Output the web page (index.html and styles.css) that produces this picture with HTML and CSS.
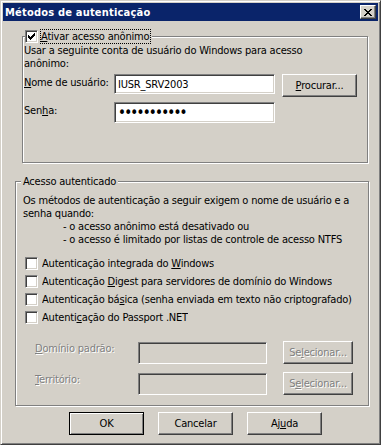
FILE: index.html
```html
<!DOCTYPE html>
<html lang="pt-BR">

<head>
    <meta charset="UTF-8">
    <meta name="viewport" content="width=device-width, initial-scale=1.0">
    <title>Métodos de autenticação</title>
    <link rel="stylesheet" href="styles.css">
</head>

<body>
    <div class="window">
        <div class="titlebar">
            <span class="title">Métodos de autenticação</span>
            <span class="close">
                <svg viewBox="0 0 8 7" width="8" height="7" shape-rendering="crispEdges">
                    <path d="M0 0h2v1h-2z M6 0h2v1h-2z M1 1h2v1h-2z M5 1h2v1h-2z M2 2h4v1h-4z M3 3h2v1h-2z M2 4h4v1h-4z M1 5h2v1h-2z M5 5h2v1h-2z M0 6h2v1h-2z M6 6h2v1h-2z" fill="#000" />
                </svg>
            </span>
        </div>

        <fieldset class="group anon">
            <legend>
                <span class="cb checked">
                    <svg viewBox="0 0 7 7" width="7" height="7" shape-rendering="crispEdges">
                        <path d="M0 2h1v3h-1z M1 3h1v3h-1z M2 4h1v3h-1z M3 3h1v3h-1z M4 2h1v3h-1z M5 1h1v3h-1z M6 0h1v3h-1z" fill="#000" />
                    </svg>
                </span>
                <span class="focus"><u>A</u>tivar acesso anônimo</span>
            </legend>
            <div class="inner">
                <p>Usar a seguinte conta de usuário do Windows para acesso<br>anônimo:</p>
                <div class="field user">
                    <label><u>N</u>ome de usuário:</label>
                    <input type="text" value="IUSR_SRV2003">
                    <button class="btn"><u>P</u>rocurar...</button>
                </div>
                <div class="field pass">
                    <label>Sen<u>h</u>a:</label>
                    <input type="password" value="xxxxxxxxxxx">
                </div>
            </div>
        </fieldset>

        <fieldset class="group auth">
            <legend>Acesso autenticado</legend>
            <div class="inner">
                <p>Os métodos de autenticação a seguir exigem o nome de usuário e a<br>senha quando:</p>
                <p class="cases">- o acesso anônimo está desativado ou<br>- o acesso é limitado por listas de controle de acesso NTFS</p>
                <div class="checks">
                    <div class="check"><span class="cb"></span><span class="text">Autenticação integrada do <u>W</u>indows</span></div>
                    <div class="check"><span class="cb"></span><span class="text">Autenticação <u>D</u>igest para servidores de domínio do Windows</span></div>
                    <div class="check"><span class="cb"></span><span class="text">Autenticação bá<u>s</u>ica (senha enviada em texto não criptografado)</span></div>
                    <div class="check"><span class="cb"></span><span class="text">Autenti<u>c</u>ação do Passport .NET</span></div>
                </div>
                <div class="field off">
                    <label><u>D</u>omínio padrão:</label>
                    <input type="text" disabled>
                    <button class="btn" disabled>Se<u>l</u>ecionar...</button>
                </div>
                <div class="field off">
                    <label><u>T</u>erritório:</label>
                    <input type="text" disabled>
                    <button class="btn" disabled>S<u>e</u>lecionar...</button>
                </div>
            </div>
        </fieldset>

        <div class="actions">
            <button class="btn default">OK</button>
            <button class="btn">Cancelar</button>
            <button class="btn">Aj<u>u</u>da</button>
        </div>
    </div>
</body>

</html>
```

FILE: styles.css
```css
html,
body {
    margin: 0;
    background-color: #d4d0c8;
}

.window {
    width: 381px;
    height: 445px;
    box-sizing: border-box;
    background-color: #d4d0c8;
    border: 1px solid;
    border-color: #d4d0c8 #404040 #404040 #d4d0c8;
    box-shadow: inset 1px 1px #fff, inset -1px -1px #808080;
    padding: 2px;
    font-family: "DejaVu Sans Condensed", "Liberation Sans", sans-serif;
    font-size: 11px;
    line-height: 13px;
    letter-spacing: -0.2px;
    color: #000;
}

.titlebar {
    height: 18px;
    display: flex;
    align-items: center;
    background-color: #0a246a;
    color: #fff;
    padding: 0 2px;
    margin-bottom: 1px;
}

.title {
    font-weight: bold;
    letter-spacing: 0.2px;
}

.close {
    width: 16px;
    height: 14px;
    box-sizing: border-box;
    margin-left: auto;
    display: flex;
    align-items: center;
    justify-content: center;
    background-color: #d4d0c8;
    border: 1px solid;
    border-color: #fff #404040 #404040 #fff;
    box-shadow: inset -1px -1px #808080;
}

/* group boxes: etched frame */
.group {
    margin: 0;
    padding: 0;
    min-width: 0;
    box-sizing: border-box;
    border: 1px solid #808080;
    box-shadow: 1px 1px #fff, inset 1px 1px #fff;
}

.group legend {
    background-color: #d4d0c8;
    padding: 0;
    line-height: 13px;
}

.group p {
    margin: 0;
    white-space: nowrap;
}

.anon {
    margin: 8px 0 0 19px;
    width: 346px;
    height: 134px;
}

.anon legend {
    display: flex;
    align-items: center;
    height: 15px;
    margin-left: 2px;
    padding-right: 1px;
}

.anon .inner {
    padding-left: 1px;
}

.focus {
    margin-left: 2px;
    border: 1px dotted #000;
    padding: 0 1px 0 0;
}

.auth {
    margin: 12px 0 0 12px;
    width: 354px;
    height: 231px;
}

.auth legend {
    margin-left: 5px;
    padding: 0 2px;
}

.auth .inner {
    padding: 6px 0 0 7px;
}

.cases {
    padding-left: 40px;
}

/* checkbox */
.cb {
    width: 13px;
    height: 13px;
    flex: none;
    box-sizing: border-box;
    display: flex;
    align-items: center;
    justify-content: center;
    background-color: #fff;
    border: 1px solid;
    border-color: #808080 #fff #fff #808080;
    box-shadow: inset 1px 1px #404040, inset -1px -1px #d4d0c8;
}

.checks {
    margin-top: 11px;
    padding-left: 2px;
}

.check {
    display: flex;
    align-items: center;
    height: 13px;
    margin-bottom: 5px;
}

.check .cb {
    margin-right: 4px;
}

.check .text {
    max-width: 310px;
    overflow: hidden;
    white-space: nowrap;
}

/* label + textbox rows */
.field {
    display: flex;
    align-items: flex-start;
}

.field label {
    flex: none;
    padding-top: 2px;
}

.field input {
    box-sizing: border-box;
    margin: 0;
    padding: 0 3px;
    font: inherit;
    letter-spacing: inherit;
    color: #000;
    background-color: #fff;
    border: 1px solid;
    border-color: #808080 #fff #fff #808080;
    box-shadow: inset 1px 1px #404040, inset -1px -1px #d4d0c8;
    outline: none;
}

.user {
    margin-top: 4px;
}

.user label,
.pass label {
    width: 90px;
}

.user input {
    width: 161px;
    height: 20px;
}

.user .btn {
    margin-left: 7px;
}

.pass {
    margin-top: 5px;
}

.pass input {
    width: 161px;
    height: 21px;
    font-size: 15px;
    letter-spacing: -1.8px;
}

.off {
    margin-top: 17px;
    padding-left: 12px;
}

.off + .off {
    margin-top: 8px;
}

.off label {
    width: 103px;
    padding-top: 1px;
    color: #808080;
    text-shadow: 1px 1px #fff;
}

.off input {
    width: 129px;
    height: 22px;
    margin-top: 1px;
    background-color: #d4d0c8;
}

.off .btn {
    width: 70px;
    margin-left: 16px;
}

/* push buttons */
.btn {
    width: 75px;
    height: 23px;
    box-sizing: border-box;
    margin: 0;
    padding: 0;
    font: inherit;
    letter-spacing: inherit;
    color: #000;
    background-color: #d4d0c8;
    border: 1px solid;
    border-color: #fff #404040 #404040 #fff;
    box-shadow: inset -1px -1px #808080;
}

.btn:disabled {
    color: #808080;
    text-shadow: 1px 1px #fff;
}

.btn.default {
    border-color: #000;
    box-shadow: inset 1px 1px #fff, inset -1px -1px #808080;
}

.actions {
    display: flex;
    gap: 14px;
    margin-top: 6px;
    padding-left: 66px;
}
```
